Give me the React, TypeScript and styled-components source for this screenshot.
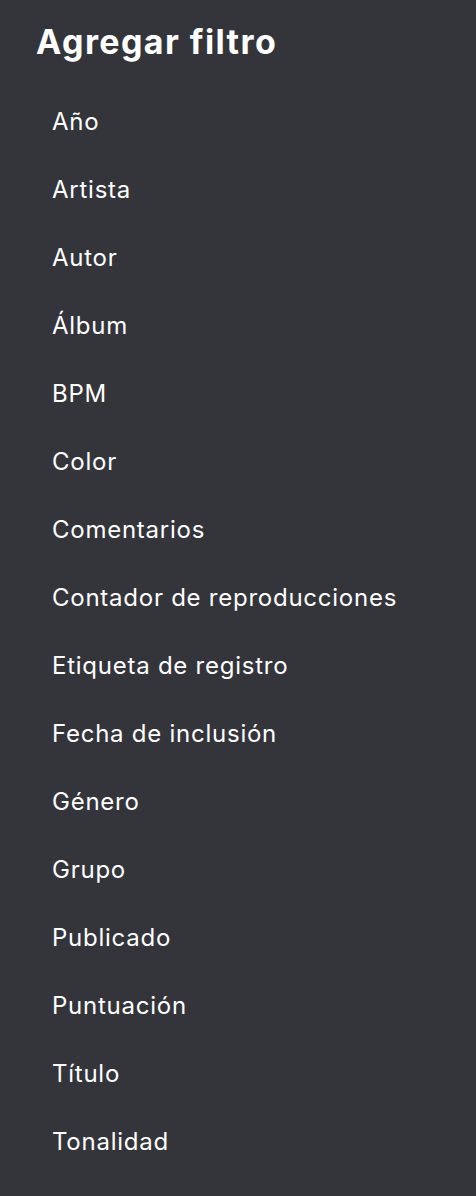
import React from 'react'
import styled, { createGlobalStyle } from 'styled-components'

const filters = [
  'Año',
  'Artista',
  'Autor',
  'Álbum',
  'BPM',
  'Color',
  'Comentarios',
  'Contador de reproducciones',
  'Etiqueta de registro',
  'Fecha de inclusión',
  'Género',
  'Grupo',
  'Publicado',
  'Puntuación',
  'Título',
  'Tonalidad'
]

const GlobalStyle = createGlobalStyle`
  html, body {
    margin: 0;
    padding: 0;
    background: #34353a;
  }
  body {
    font-family: Inter, "Noto Sans", sans-serif;
    -webkit-font-smoothing: antialiased;
  }
`

const App: React.FC = () => {
  return (
    <>
      <GlobalStyle />
      <Panel>
        <Title>Agregar filtro</Title>
        <FilterList>
          {filters.map(name => (
            <FilterItem key={name}>{name}</FilterItem>
          ))}
        </FilterList>
      </Panel>
    </>
  )
}

export default App

const Panel = styled.div`
  width: 476px;
  height: 1196px;
  box-sizing: border-box;
  background: #34353a;
  padding: 20px 0 0 36px;
  color: #ffffff;
`

const Title = styled.h1`
  margin: 0;
  font-size: 34px;
  font-weight: 700;
  line-height: 44px;
  letter-spacing: 1.4px;
`

const FilterList = styled.ul`
  list-style: none;
  margin: 24px 0 0;
  padding: 0 0 0 16px;
`

const FilterItem = styled.li`
  font-size: 24px;
  font-weight: 400;
  line-height: 68px;
  height: 68px;
  letter-spacing: 0.75px;
  cursor: pointer;
`
